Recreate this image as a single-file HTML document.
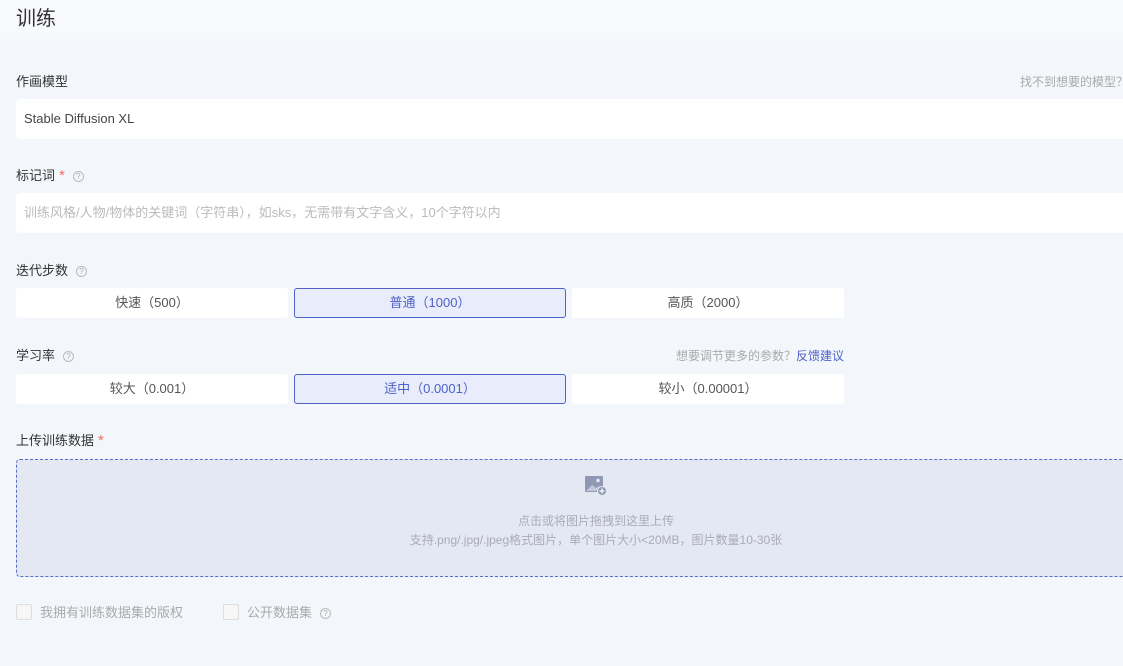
<!DOCTYPE html>
<html><head><meta charset="utf-8"><style>
*{box-sizing:border-box;margin:0;padding:0}
body{width:1123px;height:666px;overflow:hidden;background:#f3f6fb;font-family:"Liberation Sans","Noto Sans CJK SC",sans-serif;color:#333;position:relative}
.hdr{position:absolute;left:0;top:0;width:1123px;height:39px;background:#f8f9fc}
.hdr span{position:absolute;left:16px;top:2px;font-size:20px;color:#333}
.abs{position:absolute}
.lbl{font-size:13px;color:#333}
.star{color:#f56c6c;margin-left:4px;font-size:15px}
.q{display:inline-block;width:11px;height:11px;border:1px solid #bbb;border-radius:50%;font-size:8px;line-height:9px;text-align:center;color:#aaa;margin-left:8px;vertical-align:1px}
.inp{position:absolute;left:16px;width:1120px;height:40px;background:#fff;border-radius:4px;font-size:13px;line-height:40px;padding-left:8px}
.btn{position:absolute;height:30px;background:#fff;border-radius:3px;font-size:13px;line-height:30px;text-align:center;color:#555}
.sel{background:#e8ecfb;border:1px solid #4e62c8;color:#4e62c8;line-height:28px}
.cb{display:inline-block;width:16px;height:16px;border:1px solid #ddd;border-radius:2px;background:#f7f7f7;vertical-align:-3px;margin-right:8px}
</style></head><body>
<div class="hdr"><span>训练</span></div>
<div class="abs lbl" style="left:16px;top:71px">作画模型</div>
<div class="abs" style="left:1020px;top:73px;font-size:12px;color:#aaa;white-space:nowrap">找不到想要的模型？</div>
<div class="inp" style="top:99px;color:#444">Stable Diffusion XL</div>
<div class="abs lbl" style="left:16px;top:165px">标记词<span class="star">*</span><span class="q">?</span></div>
<div class="inp" style="top:193px;color:#bbb">训练风格/人物/物体的关键词（字符串），如sks，无需带有文字含义，10个字符以内</div>
<div class="abs lbl" style="left:16px;top:260px">迭代步数<span class="q">?</span></div>
<div class="btn" style="left:16px;top:288px;width:272px">快速（500）</div>
<div class="btn sel" style="left:294px;top:288px;width:272px">普通（1000）</div>
<div class="btn" style="left:572px;top:288px;width:272px">高质（2000）</div>
<div class="abs lbl" style="left:16px;top:345px">学习率<span class="q">?</span></div>
<div class="abs" style="left:676px;top:347px;font-size:12px;color:#aaa;white-space:nowrap">想要调节更多的参数？<span style="color:#4e62c8">反馈建议</span></div>
<div class="btn" style="left:16px;top:374px;width:272px">较大（0.001）</div>
<div class="btn sel" style="left:294px;top:374px;width:272px">适中（0.0001）</div>
<div class="btn" style="left:572px;top:374px;width:272px">较小（0.00001）</div>
<div class="abs lbl" style="left:16px;top:430px">上传训练数据<span class="star">*</span></div>
<div class="abs" style="left:16px;top:459px;width:1120px;height:118px;background:#e4e8f3;border:1px dashed #5a6cc8;border-radius:4px"></div>
<svg class="abs" style="left:585px;top:476px" width="22" height="22" viewBox="0 0 22 22"><rect x="0" y="0" width="18" height="16" rx="1" fill="#9099b3"/><path d="M1 15 L7 9 L11 12 L14 10 L18 14 V15Z" fill="#e4e8f3" opacity=".6"/><circle cx="13" cy="4.5" r="1.8" fill="#e4e8f3"/><circle cx="17" cy="15" r="4.5" fill="#9099b3" stroke="#e4e8f3" stroke-width="1"/><path d="M17 12.5v5M14.5 15h5" stroke="#fff" stroke-width="1.2"/></svg>
<div class="abs" style="left:16px;top:512px;width:1160px;text-align:center;font-size:12px;color:#aab;line-height:19px"><div>点击或将图片拖拽到这里上传</div><div>支持.png/.jpg/.jpeg格式图片，单个图片大小&lt;20MB，图片数量10-30张</div></div>
<div class="abs" style="left:16px;top:602px;font-size:13px;color:#aaa"><span class="cb"></span>我拥有训练数据集的版权</div>
<div class="abs" style="left:223px;top:602px;font-size:13px;color:#aaa"><span class="cb"></span>公开数据集<span class="q">?</span></div>
</body></html>
